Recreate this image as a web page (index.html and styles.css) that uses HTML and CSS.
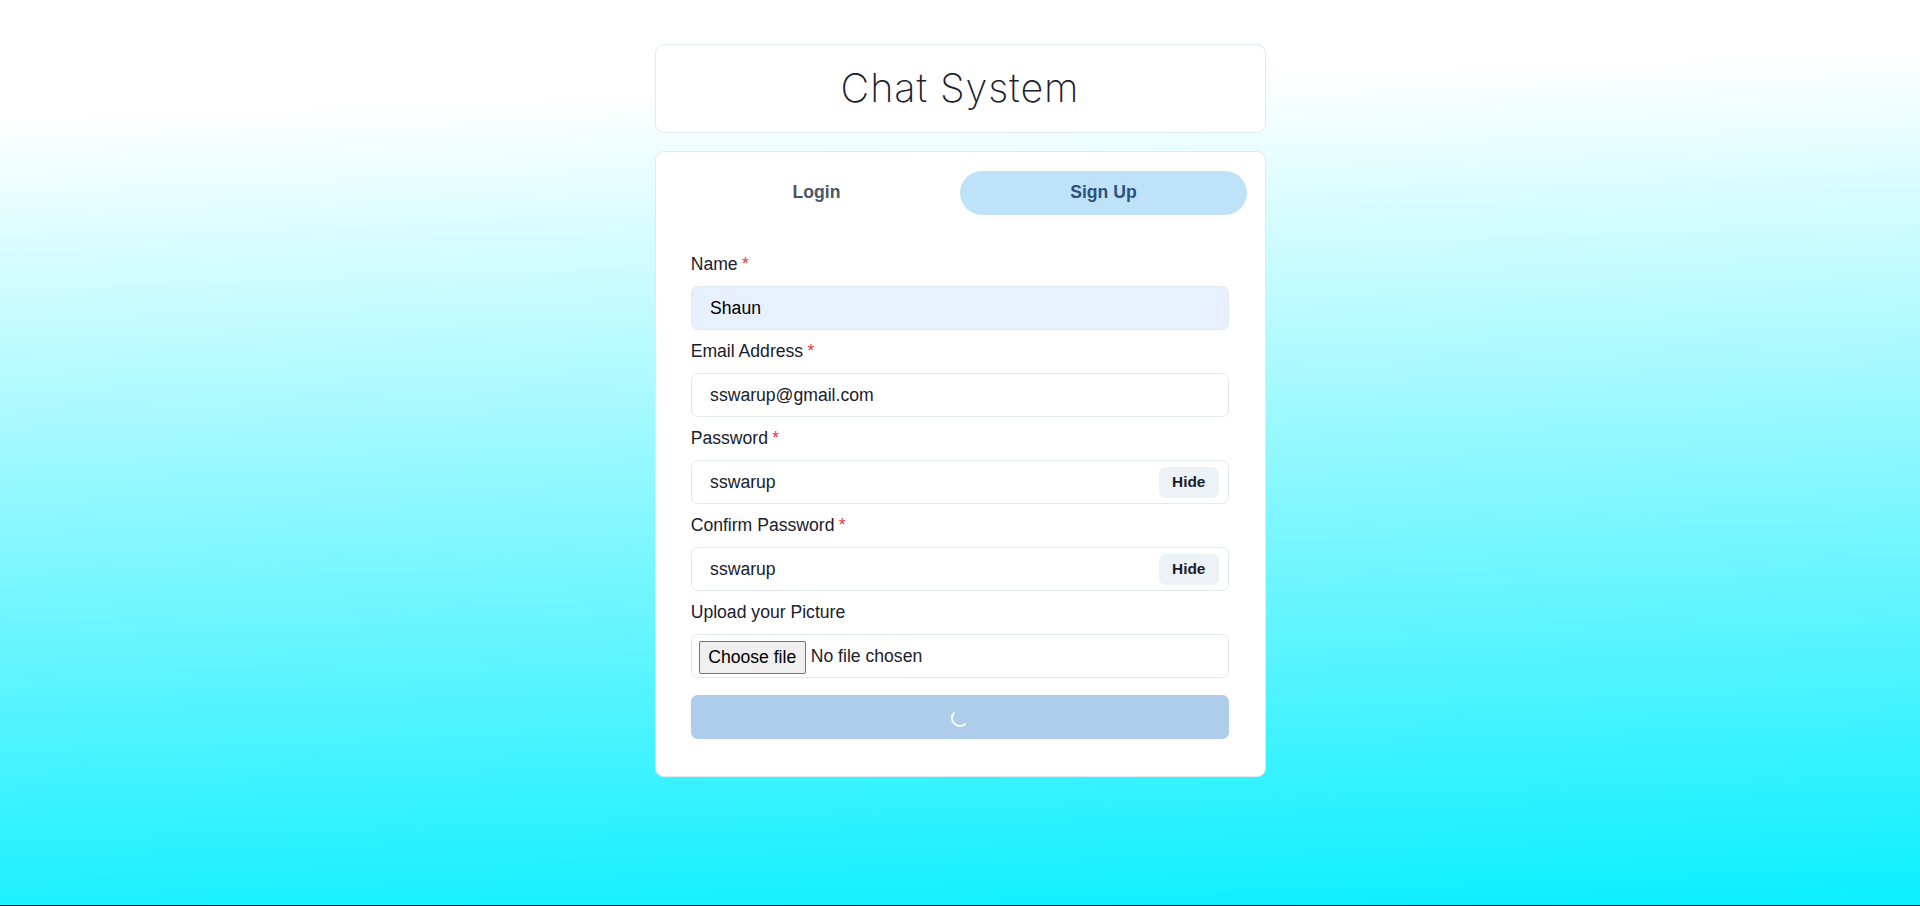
FILE: index.html
```html
<!DOCTYPE html>
<html lang="en">
<head>
<meta charset="utf-8">
<title>Chat System</title>
<link rel="stylesheet" href="styles.css">
</head>
<body>
<div class="page">
  <div class="container">
    <div class="header">
      <h1 class="title">Chat System</h1>
    </div>
    <div class="card">
      <div class="tabs">
        <div class="tab">Login</div>
        <div class="tab active">Sign Up</div>
      </div>
      <div class="panel">
        <div class="form">
          <div class="field">
            <div class="label">Name<span class="req">*</span></div>
            <div class="input autofill">Shaun</div>
          </div>
          <div class="field">
            <div class="label">Email Address<span class="req">*</span></div>
            <div class="input">sswarup@gmail.com</div>
          </div>
          <div class="field">
            <div class="label">Password<span class="req">*</span></div>
            <div class="input with-btn"><span>sswarup</span><span class="right-el"><span class="hide-btn">Hide</span></span></div>
          </div>
          <div class="field">
            <div class="label">Confirm Password<span class="req">*</span></div>
            <div class="input with-btn"><span>sswarup</span><span class="right-el"><span class="hide-btn">Hide</span></span></div>
          </div>
          <div class="field">
            <div class="label">Upload your Picture</div>
            <div class="input file"><span class="file-btn">Choose file</span><span class="file-name">No file chosen</span></div>
          </div>
          <div class="submit"><span class="spinner"></span></div>
        </div>
      </div>
    </div>
  </div>
</div>
</body>
</html>
```

FILE: styles.css
```css
html, body {
  margin: 0;
  padding: 0;
}
body {
  font-family: "Liberation Sans", Arial, sans-serif;
  color: #1a202c;
}
.page {
  min-height: 100vh;
  box-sizing: border-box;
  border-bottom: 1px solid #1c1c1c;
  background: linear-gradient(178deg, #ffffff 12%, #0aefff 100%);
  display: flex;
  flex-direction: column;
  align-items: center;
}
.container {
  width: 611px;
  display: flex;
  flex-direction: column;
}
.header {
  margin: 44px 0 18px 0;
  background: #fff;
  border: 1px solid #e2e8f0;
  border-radius: 8.8px;
  padding: 13.2px;
  text-align: center;
}
.title {
  margin: 0;
  font-family: Inter, "Open Sans", sans-serif;
  font-weight: 200;
  font-size: 39.6px;
  line-height: 60.6px;
  letter-spacing: 0.9px;
  color: #1a202c;
}
.card {
  background: #fff;
  border: 1px solid #e2e8f0;
  border-radius: 8.8px;
  padding: 18.8px 17.6px 18.8px 17.6px;
}
.tabs {
  display: flex;
  margin-bottom: 18.9px;
}
.tab {
  flex: 1;
  height: 44px;
  border-radius: 9999px;
  display: flex;
  align-items: center;
  justify-content: center;
  font-weight: 700;
  font-size: 17.6px;
  color: #4a5568;
}
.tab.active {
  background: #bee3f8;
  color: #2c5282;
}
.panel {
  padding: 17.6px;
}
.form {
  display: flex;
  flex-direction: column;
  gap: 7.8px;
}
.label {
  font-size: 17.6px;
  line-height: 26.4px;
  margin-bottom: 8.8px;
  color: #1a202c;
}
.req {
  color: #e53e3e;
  margin-left: 4.4px;
}
.input {
  height: 44px;
  box-sizing: border-box;
  border: 1px solid #e2e8f0;
  border-radius: 6.6px;
  padding: 0 18.4px;
  display: flex;
  align-items: center;
  font-size: 17.6px;
  color: #1a202c;
  background: #fff;
}
.input.autofill {
  background: #e8f0fe;
  color: #000;
}
.input.with-btn {
  padding-right: 0;
  justify-content: space-between;
}
.right-el {
  width: 79.2px;
  display: flex;
  align-items: center;
  justify-content: center;
}
.hide-btn {
  height: 30.8px;
  padding: 0 13.2px;
  border-radius: 6.6px;
  background: #edf2f7;
  font-weight: 700;
  font-size: 15.4px;
  display: flex;
  align-items: center;
  color: #1a202c;
}
.input.file {
  padding: 0 7px;
}
.file-btn {
  height: 33px;
  box-sizing: border-box;
  padding: 0 8.5px;
  border: 1px solid #767676;
  border-radius: 2px;
  background: #efefef;
  font-size: 17.6px;
  color: #000;
  display: flex;
  align-items: center;
  margin: 2px 5px 0 0;
}
.file-name {
  font-size: 17.6px;
  color: #1a202c;
}
.submit {
  margin-top: 9.2px;
  height: 44px;
  border-radius: 6.6px;
  background: #adcdeb;
  display: flex;
  align-items: center;
  justify-content: center;
}
.spinner {
  width: 14px;
  height: 14px;
  border: 2px solid #fff;
  border-bottom-color: transparent;
  border-left-color: transparent;
  border-radius: 50%;
  transform: rotate(180deg);
  margin-top: 2px;
}
```
